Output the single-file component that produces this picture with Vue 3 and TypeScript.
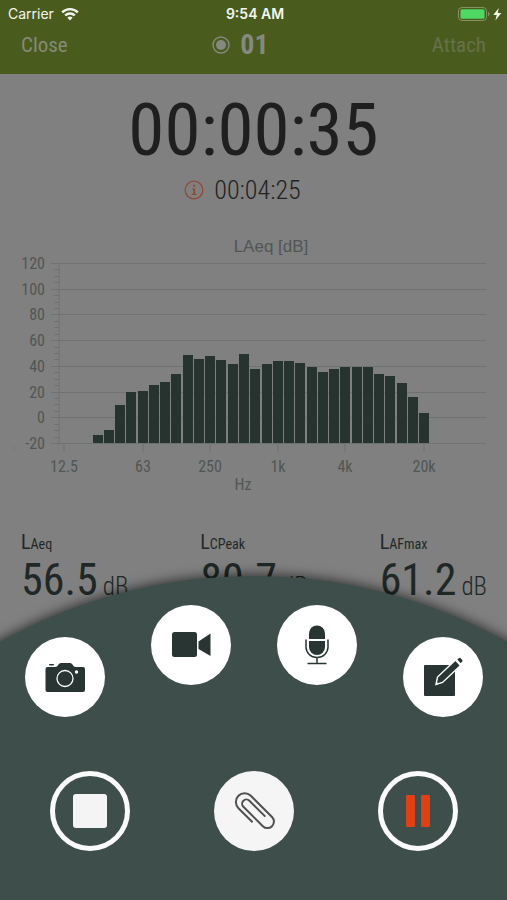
<script setup lang="ts">
interface Metric {
  sub: string
  value: string
}

const metrics: Metric[] = [
  { sub: 'Aeq', value: '56.5' },
  { sub: 'CPeak', value: '80.7' },
  { sub: 'AFmax', value: '61.2' },
]

const levels: number[] = [
  -13.4, -9.5, 9.3, 19.4, 20.7, 25.4, 27.2, 33.9, 48.1, 45.6, 47.3, 44.5, 41.4, 49.2, 37.8,
  41.7, 43.5, 43.5, 42.5, 38.8, 34.9, 37.8, 38.8, 38.8, 38.8, 33.9, 32.1, 26.4, 15.8, 3.7,
]

const MIN_DB = -20
const MAX_DB = 120
const PLOT_TOP = 33
const PLOT_BOTTOM = 213

const yOf = (db: number): number =>
  Math.round(PLOT_BOTTOM - ((db - MIN_DB) / (MAX_DB - MIN_DB)) * (PLOT_BOTTOM - PLOT_TOP))

const bars = levels.map((db, i) => ({
  x: Math.round(92.6 + i * 11.26),
  y: yOf(db),
  height: PLOT_BOTTOM - yOf(db),
}))

const majors = [120, 100, 80, 60, 40, 20, 0, -20].map((db) => ({ db, y: yOf(db) }))

const minors: number[] = []
for (let db = MIN_DB; db < MAX_DB; db += 5) {
  if (db % 20 !== 0) minors.push(yOf(db))
}

const frequencies = [
  { label: '12.5', x: 64 },
  { label: '63', x: 143 },
  { label: '250', x: 210 },
  { label: '1k', x: 278 },
  { label: '4k', x: 345 },
  { label: '20k', x: 424 },
]
</script>

<template>
  <div class="page">
    <header class="top">
      <div class="status">
        <div class="carrier">
          <span>Carrier</span>
          <svg width="18" height="14" viewBox="0 0 18 14" aria-hidden="true">
            <g fill="none" stroke="#f4f6ee" stroke-width="2.4">
              <path d="M1.2 5.4a11 11 0 0 1 15.6 0" />
              <path d="M4.2 8.5a6.8 6.8 0 0 1 9.6 0" />
            </g>
            <path d="M9 13.4 6.4 10.7a3.7 3.7 0 0 1 5.2 0z" fill="#f4f6ee" />
          </svg>
        </div>
        <span class="clock">9:54 AM</span>
        <svg class="battery" width="45" height="16" viewBox="0 0 45 16" aria-hidden="true">
          <rect x="1.5" y="1.5" width="28" height="13" rx="3.5" fill="none" stroke="#869367" />
          <rect x="3.5" y="3.2" width="24" height="9.600" rx="1.5" fill="#4fd964" />
          <path d="M31 5.800q1.600.8 1.600 2.200T31 10.200z" fill="#869367" />
          <path d="M41.800 2 36.300 9h3.400l-1.300 5.500L44.300 7h-3.600z" fill="#f4f6ee" />
        </svg>
      </div>
      <nav class="nav">
        <button type="button" class="link">Close</button>
        <h1 class="title">
          <svg width="18" height="18" viewBox="0 0 18 18" aria-hidden="true">
            <circle cx="9" cy="9" r="8" fill="none" stroke="#858980" stroke-width="1.400" />
            <circle cx="9" cy="9" r="5" fill="#858980" />
          </svg>
          <span>01</span>
        </h1>
        <button type="button" class="link attach" disabled>Attach</button>
      </nav>
    </header>

    <main class="content">
      <div class="timer">00:00:35</div>
      <div class="elapsed">
        <svg width="20" height="20" viewBox="0 0 20 20" aria-hidden="true">
          <circle cx="10" cy="10" r="8.800" fill="none" stroke="#8c4c38" stroke-width="1.300" />
          <path d="M9 4.800h2.200v2H9zM8 8.400h3.200v5.400h1.300v1.200H7.800v-1.200h1.400V9.600H8z" fill="#8c4c38" />
        </svg>
        <span>00:04:25</span>
      </div>

      <svg class="chart" viewBox="0 0 507 270" role="img" aria-label="LAeq [dB]">
        <text class="chart-title" x="271" y="22" text-anchor="middle">LAeq [dB]</text>
        <g class="grid">
          <line v-for="m in majors" :key="m.db" x1="51" x2="486" :y1="m.y + 0.5" :y2="m.y + 0.5" />
          <line v-for="y in minors" :key="y" x1="54" x2="59" :y1="y + 0.5" :y2="y + 0.5" />
          <line v-for="f in frequencies" :key="f.x" :x1="f.x" :x2="f.x" y1="214" y2="222" />
          <line x1="59" x2="59" y1="33" y2="214" />
          <line class="faint" x1="14" x2="14" y1="215" y2="222" />
        </g>
        <g class="labels">
          <text v-for="m in majors" :key="m.db" x="45" :y="m.y + 6" text-anchor="end">{{ m.db }}</text>
          <text v-for="f in frequencies" :key="f.x" :x="f.x" y="242" text-anchor="middle">{{ f.label }}</text>
          <text x="243" y="260" text-anchor="middle">Hz</text>
        </g>
        <rect
          v-for="b in bars"
          :key="b.x"
          class="bar"
          :x="b.x"
          :y="b.y"
          width="10"
          :height="b.height"
        />
      </svg>

      <section class="metrics">
        <div v-for="m in metrics" :key="m.sub" class="metric">
          <div class="metric-name">L<small>{{ m.sub }}</small></div>
          <div class="metric-value">{{ m.value }}<small>dB</small></div>
        </div>
      </section>
    </main>

    <section class="sheet">
      <div class="row arc">
        <button type="button" class="round low" aria-label="Photo">
          <svg width="42" height="32" viewBox="0 0 42 32">
            <path
              d="M3.500 6h7.500c3.500 0 3-4 6-4h9c3 0 2.500 4 6 4h7a2 2 0 0 1 2 2v21a2 2 0 0 1-2 2H3.500a2 2 0 0 1-2-2V8a2 2 0 0 1 2-2z"
              fill="#283532"
            />
            <rect x="5" y="3" width="5" height="1.500" rx=".7" fill="#283532" />
            <circle cx="21" cy="17.500" r="8" fill="none" stroke="#fff" stroke-width="1.300" />
            <circle cx="32.500" cy="11" r="1.700" fill="#fff" />
          </svg>
        </button>
        <button type="button" class="round" aria-label="Video">
          <svg width="40" height="28" viewBox="0 0 40 28">
            <rect x="1" y="1" width="25" height="25" rx="2.500" fill="#283532" />
            <path d="M27.500 10.500 39.500 2.500v22.500l-12-7z" fill="#283532" />
          </svg>
        </button>
        <button type="button" class="round" aria-label="Audio note">
          <svg width="24" height="40" viewBox="0 0 24 40">
            <path d="M4 14V8.500a8 8 0 0 1 16 0V14z" fill="#283532" />
            <path d="M4 16h16v6a8 8 0 0 1-16 0z" fill="#283532" />
            <path
              d="M1 14.500v7.500a11 10.500 0 0 0 22 0v-7.500M12 32.500V38M2.500 38.500h19"
              fill="none"
              stroke="#283532"
              stroke-width="1.500"
            />
          </svg>
        </button>
        <button type="button" class="round low" aria-label="Text note">
          <svg width="40" height="40" viewBox="0 0 40 40">
            <rect x="1" y="8" width="31" height="31" rx="1" fill="#283532" />
            <path
              d="M13 27.500 14.500 20 32.500 3 37.500 8.500 19.500 25.500z"
              fill="#283532"
              stroke="#fff"
              stroke-width="1.400"
            />
            <path d="M13 27.500 13.600 25 15.300 26.800z" fill="#fff" />
            <path d="m34.300 2.400 1.900-1.500q.7-.5 1.300.1l1.800 2q.5.600 0 1.300L37.700 6.200z" fill="#283532" />
          </svg>
        </button>
      </div>
      <div class="row controls">
        <button type="button" class="round ring" aria-label="Stop">
          <svg width="34" height="34" viewBox="0 0 34 34">
            <rect width="34" height="34" rx="3" fill="#f4f4f4" />
          </svg>
        </button>
        <button type="button" class="round pale" aria-label="Attachments">
          <svg width="50" height="50" viewBox="-25 -25 50 50">
            <path
              transform="rotate(45)"
              d="M7 9H-13A8.750 8.750 0 0 1-13-8.500H17A6.500 6.500 0 0 1 17 4.500H-10.500A4.250 4.250 0 0 1-10.500-4H12"
              fill="none"
              stroke="#505050"
              stroke-width="2"
            />
          </svg>
        </button>
        <button type="button" class="round ring" aria-label="Pause">
          <svg width="26" height="32" viewBox="0 0 26 32">
            <rect x="1" y="0" width="9" height="32" rx="1" fill="#e04015" />
            <rect x="16" y="0" width="9" height="32" rx="1" fill="#e04015" />
          </svg>
        </button>
      </div>
    </section>
  </div>
</template>

<style>
body {
  margin: 0;
  background: #808080;
}
</style>

<style scoped>
.page {
  position: relative;
  min-height: 100vh;
  overflow: hidden;
  background: #808080;
  font-family: "Roboto Condensed", Roboto, sans-serif;
  color: #1f2826;
}

.top {
  height: 74px;
  background: #4a5b1e;
}

.status {
  display: grid;
  grid-template-columns: 1fr auto 1fr;
  align-items: center;
  height: 27px;
  padding: 0 5px 0 8px;
  font-family: Inter, sans-serif;
  font-size: 14px;
  color: #f4f6ee;
}

.carrier {
  display: flex;
  align-items: center;
  gap: 7px;
}

.clock {
  font-weight: 600;
}

.battery {
  justify-self: end;
}

.nav {
  display: grid;
  grid-template-columns: 1fr auto 1fr;
  align-items: center;
  height: 36px;
  padding: 0 21px;
  color: #858980;
}

.link {
  justify-self: start;
  padding: 0;
  border: 0;
  background: none;
  font: inherit;
  font-size: 21px;
  color: #858a78;
}

.attach {
  justify-self: end;
  color: #65724a;
}

.title {
  display: flex;
  align-items: center;
  gap: 10px;
  margin: 0 26px 0 0;
  font-size: 28px;
  line-height: 32px;
}

.timer {
  padding-top: 12px;
  font-size: 73px;
  line-height: 88px;
  text-align: center;
  color: #1f1f1f;
}

.elapsed {
  display: flex;
  justify-content: center;
  align-items: center;
  gap: 10px;
  height: 32px;
  padding-right: 22px;
  font-size: 26px;
  font-weight: 300;
  color: #222;
}

.chart {
  display: block;
  width: 100%;
  margin-top: 24px;
}

.chart-title {
  font-family: "Liberation Sans", sans-serif;
  font-size: 17px;
  fill: #515654;
}

.grid line {
  stroke: #6f7272;
  stroke-width: 1;
}

.grid .faint {
  stroke: #787a7a;
}

.labels text {
  font-size: 16px;
  fill: #505654;
}

.bar {
  fill: #26332f;
}

.metrics {
  display: flex;
  justify-content: space-between;
  padding: 30px 20px 0 21px;
}

.metric-name {
  font-size: 20px;
  line-height: 24px;
}

.metric-name small {
  font-size: 14px;
}

.metric-value {
  display: flex;
  align-items: baseline;
  gap: 5px;
  font-size: 44px;
  line-height: 48px;
}

.metric-value small {
  font-size: 25px;
  font-weight: 300;
}

.sheet {
  position: absolute;
  right: 0;
  bottom: 0;
  left: 0;
  display: flex;
  flex-direction: column;
  gap: 54px;
  padding: 29px 0 49px;
}

.sheet::before {
  content: "";
  position: absolute;
  top: 0;
  left: 50%;
  width: 205vw;
  height: 205vw;
  margin-left: -102.5vw;
  border-radius: 50%;
  background: #3e4f4b;
  box-shadow: 0 0 12px 2px rgba(0, 0, 0, 0.6);
}

.row {
  position: relative;
  display: flex;
  justify-content: space-between;
  align-items: flex-start;
}

.arc {
  padding: 0 24px 0 25px;
}

.controls {
  padding: 0 49px 0 50px;
}

.round {
  display: flex;
  justify-content: center;
  align-items: center;
  box-sizing: border-box;
  width: 80px;
  height: 80px;
  padding: 0;
  border: 0;
  border-radius: 50%;
  background: #fff;
}

.low {
  margin-top: 32px;
}

.ring {
  border: 5px solid #fafafa;
  background: none;
}

.pale {
  background: #f5f5f5;
}
</style>
